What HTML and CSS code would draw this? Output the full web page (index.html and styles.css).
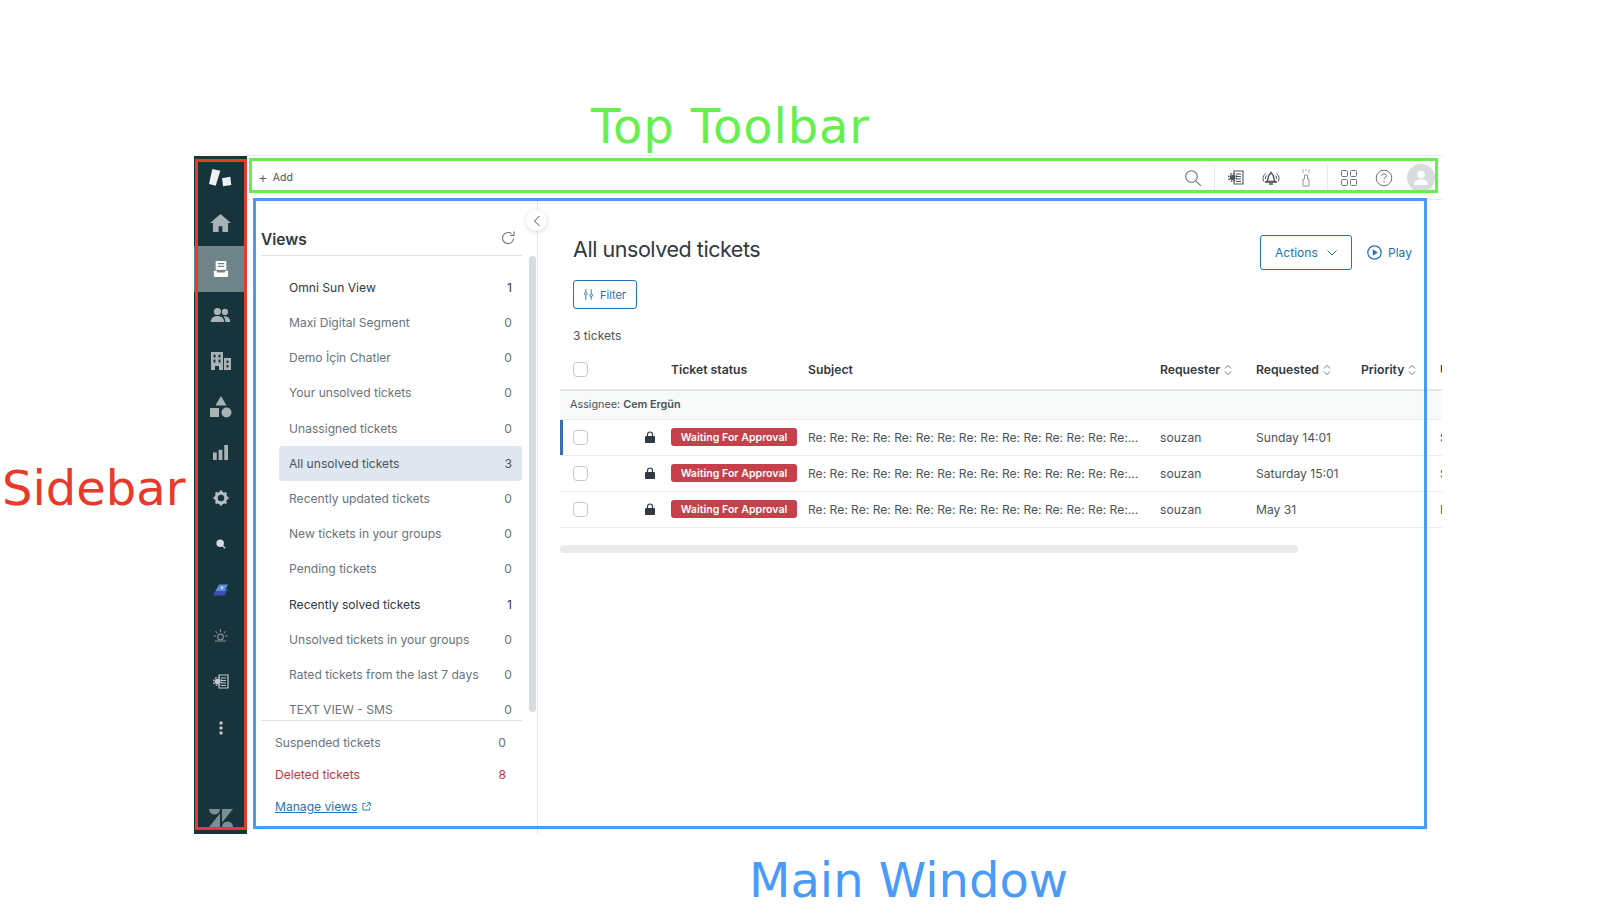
FILE: index.html
```html
<!DOCTYPE html>
<html lang="en">
<head>
    <meta charset="UTF-8">
    <title>All unsolved tickets</title>
    <link rel="stylesheet" href="styles.css">
</head>
<body>
<div class="screen">

    <div class="app">
        <nav class="sidebar">
            <div class="nav-item nav-logo">
                <svg width="23" height="18" viewBox="0 0 23 18"><path d="M3.300 0l8 1.700-4.600 15L0 15z" fill="#eef1f2"/><path d="M13 9.300l8.300-1.600 1 8.300-8.300 1.300z" fill="#eef1f2"/></svg>
            </div>
            <div class="nav-item">
                <svg width="21" height="18" viewBox="0 0 22 19"><path d="M11 0L0 9.500h3V19h6v-6h4v6h6V9.500h3z" fill="#a9b3b6"/></svg>
            </div>
            <div class="nav-item nav-active">
                <svg width="16" height="18" viewBox="0 0 18 20"><path d="M3 1h12v10H3z" fill="#fff"/><path d="M5.500 4h7M5.500 7h7" stroke="#6f8488" stroke-width="1.500"/><path d="M1 12h3l1 2h8l1-2h3v6a1 1 0 0 1-1 1H2a1 1 0 0 1-1-1z" fill="#fff"/></svg>
            </div>
            <div class="nav-item">
                <svg width="21" height="16" viewBox="0 0 22 18"><circle cx="7.500" cy="5" r="4" fill="#a9b3b6"/><circle cx="16" cy="5.500" r="3.500" fill="#a9b3b6"/><path d="M0 17c0-4.500 3-7 7.500-7s7.500 2.500 7.500 7z" fill="#a9b3b6"/><path d="M16.500 17H22c0-4-2.500-6.500-6-6.500-.8 0-1.300.1-1.800.2 1.500 1.300 2.300 3.600 2.300 6.300z" fill="#a9b3b6"/></svg>
            </div>
            <div class="nav-item">
                <svg width="20" height="20" viewBox="0 0 20 20"><path fill-rule="evenodd" d="M0 1h12v18H8v-4H4v4H0zM2.500 3.500v3h2v-3zm5 0v3h2v-3zm-5 5v3h2v-3zm5 0v3h2v-3z" fill="#a9b3b6"/><path fill-rule="evenodd" d="M13 7h7v12h-7zm2.500 2.500v2.500h2V9.500zm0 4.500v2.500h2V14z" fill="#a9b3b6"/></svg>
            </div>
            <div class="nav-item">
                <svg width="22" height="22" viewBox="0 0 22 22"><path d="M11 0l5.500 9.500h-11z" fill="#a9b3b6"/><path d="M0 12h9v9H0z" fill="#a9b3b6"/><circle cx="16.500" cy="16.500" r="5" fill="#a9b3b6"/></svg>
            </div>
            <div class="nav-item">
                <svg width="15" height="15" viewBox="0 0 16 16"><path d="M0 8h4v8H0zM6 5h4v11H6zM12 0h4v16h-4z" fill="#a9b3b6"/></svg>
            </div>
            <div class="nav-item">
                <svg width="16" height="16" viewBox="0 0 16 16"><circle cx="8" cy="8" r="4.800" fill="none" stroke="#b5bec0" stroke-width="3"/><path d="M8 .5v3M8 12.500v3M.5 8h3M12.500 8h3M2.700 2.700l2 2M11.300 11.300l2 2M2.700 13.300l2-2M11.300 4.700l2-2" stroke="#b5bec0" stroke-width="2.600"/></svg>
            </div>
            <div class="nav-item">
                <svg width="10" height="10" viewBox="0 0 12 12"><circle cx="5" cy="5" r="4.500" fill="#d5dadc"/><path d="M8 8l3 3" stroke="#d5dadc" stroke-width="1.600"/></svg>
            </div>
            <div class="nav-item">
                <svg width="15" height="12" viewBox="0 0 15 12"><path d="M0 11.500L3.500 5h11.500l-3.500 6.500z" fill="#3c4fb8"/><path d="M2.500 7L6 .5h9L11.500 7z" fill="#5b8fd8"/><path d="M7.500 3.800h3M9 2.300v3" stroke="#e4ecf5" stroke-width="1"/></svg>
            </div>
            <div class="nav-item">
                <svg width="15" height="13" viewBox="0 0 15 13"><circle cx="7.500" cy="8" r="2.800" fill="none" stroke="#7f9094" stroke-width="1.200"/><path d="M7.500 0v3M2.500 2l1.500 2.500M12.500 2L11 4.500M.5 7h2.500M12 7h2.500M2 12h11" stroke="#7f9094" stroke-width="1"/></svg>
            </div>
            <div class="nav-item">
                <svg width="16" height="15" viewBox="0 0 16 15"><path d="M6 1h9v13H6z" fill="none" stroke="#c0c8ca" stroke-width="1.200"/><path d="M8 4h5M8 6.500h5M8 9h5M8 11.500h5" stroke="#c0c8ca"/><circle cx="4.500" cy="7.500" r="2.800" fill="#c0c8ca"/><circle cx="4.500" cy="7.500" r="3.900" fill="none" stroke="#c0c8ca" stroke-width="1.400" stroke-dasharray="1.600 1.500"/></svg>
            </div>
            <div class="nav-item">
                <svg width="4" height="14" viewBox="0 0 4 14"><circle cx="2" cy="2" r="1.700" fill="#c0c8ca"/><circle cx="2" cy="7" r="1.700" fill="#c0c8ca"/><circle cx="2" cy="12" r="1.700" fill="#c0c8ca"/></svg>
            </div>
            <div class="nav-brand">
                <svg width="24" height="18" viewBox="0 0 24 18"><path d="M11 4.500V18H0z" fill="#7b8e92"/><path d="M11 0a5.500 5.500 0 0 1-11 0z" fill="#7b8e92"/><path d="M13 13.500V0h11z" fill="#7b8e92"/><path d="M13 18a5.500 5.500 0 0 1 11 0z" fill="#7b8e92"/></svg>
            </div>
        </nav>

        <div class="workspace">
            <header class="toolbar">
                <div class="add-btn"><span class="add-plus">+</span> Add</div>
                <div class="tools">
                    <div class="tool">
                        <svg width="18" height="18" viewBox="0 0 18 18"><circle cx="7.500" cy="7.500" r="5.800" fill="none" stroke="#68737d" stroke-width="1.100"/><path d="M11.800 11.800l5 5" stroke="#68737d" stroke-width="1.100"/></svg>
                    </div>
                    <div class="tool-divider"></div>
                    <div class="tool">
                        <svg width="16" height="15" viewBox="0 0 16 15"><path d="M6 1h9v13H6z" fill="#fff" stroke="#49545c" stroke-width="1.100"/><path d="M8 4h5M8 6.500h5M8 9h5M8 11.500h5" stroke="#49545c"/><circle cx="4.500" cy="7.500" r="2.800" fill="#49545c"/><circle cx="4.500" cy="7.500" r="3.900" fill="none" stroke="#49545c" stroke-width="1.400" stroke-dasharray="1.600 1.500"/></svg>
                    </div>
                    <div class="tool">
                        <svg width="18" height="14" viewBox="0 0 18 14"><path d="M5 10.500c1-1.500 1-3 1.500-5C7 3.500 8 2.500 9 2.500s2 1 2.500 3c.5 2 .5 3.500 1.500 5z" fill="none" stroke="#49545c" stroke-width="1.400"/><path d="M3 11h12M7 13h4M9 .5V2" stroke="#49545c" stroke-width="1.300"/><path d="M3.500 2.500C1.800 4 1 5.500 1 7.500c0 1 .3 2 .8 3M14.500 2.500C16.200 4 17 5.500 17 7.500c0 1-.3 2-.8 3M4.500 4.500C3.800 5.500 3.300 6.500 3.300 8M13.500 4.500c.7 1 1.200 2 1.200 3.500" fill="none" stroke="#49545c"/></svg>
                    </div>
                    <div class="tool">
                        <svg width="10" height="18" viewBox="0 0 10 18"><path d="M1 1h2M4 1h2M7 1h2M1 3h2M7 3h2" stroke="#a3abb0"/><path d="M3.500 6h3v4h1.500v7H2v-7h1.500z" fill="none" stroke="#8d969c"/></svg>
                    </div>
                    <div class="tool-divider"></div>
                    <div class="tool">
                        <svg width="16" height="16" viewBox="0 0 16 16"><g fill="none" stroke="#68737d" stroke-width="1"><rect x=".5" y=".5" width="6" height="6" rx="1"/><rect x="9.500" y=".5" width="6" height="6" rx="1"/><rect x=".5" y="9.500" width="6" height="6" rx="1"/><rect x="9.500" y="9.500" width="6" height="6" rx="1"/></g></svg>
                    </div>
                    <div class="tool">
                        <svg width="18" height="18" viewBox="0 0 18 18"><circle cx="9" cy="9" r="7.800" fill="none" stroke="#68737d" stroke-width="1"/><path d="M6.800 7c0-1.300 1-2.200 2.300-2.200S11.300 5.700 11.300 7c0 1.700-2.200 1.700-2.200 3.500" fill="none" stroke="#68737d"/><circle cx="9.100" cy="12.800" r=".7" fill="#68737d"/></svg>
                    </div>
                    <div class="avatar">
                        <svg width="16" height="16" viewBox="0 0 16 16"><circle cx="8" cy="4.500" r="3.800" fill="#fff"/><path d="M1 15c0-3.500 3-5.500 7-5.500s7 2 7 5.500z" fill="#fff"/></svg>
                    </div>
                </div>
            </header>

            <div class="content">
                <aside class="views">
                    <div class="collapse">
                        <svg width="8" height="12" viewBox="0 0 8 12"><path d="M6.500 1L1.500 6l5 5" fill="none" stroke="#49545c" stroke-width="1"/></svg>
                    </div>
                    <div class="views-head">
                        <h2>Views</h2>
                        <svg class="views-refresh" width="14" height="14" viewBox="0 0 14 14"><path d="M12.500 7.500A5.500 5.500 0 1 1 10.500 2.800" fill="none" stroke="#68737d" stroke-width="1.100"/><path d="M13 .5V4.500H9" fill="none" stroke="#68737d" stroke-width="1.100"/></svg>
                    </div>
                    <div class="views-list">
                        <div class="views-scroll"></div>
                        <div class="view-row view-has"><span>Omni Sun View</span><span>1</span></div>
                        <div class="view-row"><span>Maxi Digital Segment</span><span>0</span></div>
                        <div class="view-row"><span>Demo İçin Chatler</span><span>0</span></div>
                        <div class="view-row"><span>Your unsolved tickets</span><span>0</span></div>
                        <div class="view-row"><span>Unassigned tickets</span><span>0</span></div>
                        <div class="view-row view-selected"><span>All unsolved tickets</span><span>3</span></div>
                        <div class="view-row"><span>Recently updated tickets</span><span>0</span></div>
                        <div class="view-row"><span>New tickets in your groups</span><span>0</span></div>
                        <div class="view-row"><span>Pending tickets</span><span>0</span></div>
                        <div class="view-row view-has"><span>Recently solved tickets</span><span>1</span></div>
                        <div class="view-row"><span>Unsolved tickets in your groups</span><span>0</span></div>
                        <div class="view-row"><span>Rated tickets from the last 7 days</span><span>0</span></div>
                        <div class="view-row"><span>TEXT VIEW - SMS</span><span>0</span></div>
                    </div>
                    <div class="views-foot">
                        <div class="foot-row"><span>Suspended tickets</span><span>0</span></div>
                        <div class="foot-row foot-deleted"><span>Deleted tickets</span><span>8</span></div>
                        <div class="foot-row">
                            <a class="manage-link" href="#">Manage views</a>
                            <svg class="manage-icon" width="9" height="9" viewBox="0 0 10 10"><path d="M4 1.500H1v7.500h7.500V6M5.500 .8h3.700v3.700M9 1L4.500 5.500" fill="none" stroke="#1f73b7"/></svg>
                        </div>
                    </div>
                </aside>

                <main class="tickets">
                    <div class="tickets-head">
                        <h1>All unsolved tickets</h1>
                        <div class="tickets-actions">
                            <button class="btn btn-actions">Actions
                                <svg width="10" height="6" viewBox="0 0 10 6"><path d="M.5 .5L5 5 9.500 .5" fill="none" stroke="#1f73b7"/></svg>
                            </button>
                            <div class="play">
                                <svg width="15" height="15" viewBox="0 0 15 15"><circle cx="7.500" cy="7.500" r="6.700" fill="none" stroke="#1f73b7" stroke-width="1.200"/><path d="M5.800 4.300v6.400l5-3.200z" fill="#1f73b7"/></svg>
                                Play
                            </div>
                        </div>
                    </div>
                    <button class="btn btn-filter">
                        <svg width="9" height="11" viewBox="0 0 10 12"><path d="M2 0v3.500M2 7v5M8 0v5M8 8.500V12" stroke="#1f73b7"/><circle cx="2" cy="5.200" r="1.500" fill="none" stroke="#1f73b7"/><circle cx="8" cy="6.800" r="1.500" fill="none" stroke="#1f73b7"/></svg>
                        Filter
                    </button>
                    <div class="ticket-count">3 tickets</div>

                    <table class="ticket-table">
                        <colgroup>
                            <col class="col-check"><col class="col-lock"><col class="col-status"><col class="col-subject">
                            <col class="col-requester"><col class="col-requested"><col class="col-priority"><col class="col-updated">
                        </colgroup>
                        <thead>
                            <tr>
                                <th class="cell-check"><span class="check"></span></th>
                                <th></th>
                                <th>Ticket status</th>
                                <th>Subject</th>
                                <th>Requester <svg class="sort" width="8" height="12" viewBox="0 0 8 12"><path d="M1 4.500L4 1.200l3 3.300M1 7.500l3 3.300 3-3.300" fill="none" stroke="#68737d" stroke-width=".9"/></svg></th>
                                <th>Requested <svg class="sort" width="8" height="12" viewBox="0 0 8 12"><path d="M1 4.500L4 1.200l3 3.300M1 7.500l3 3.300 3-3.300" fill="none" stroke="#68737d" stroke-width=".9"/></svg></th>
                                <th>Priority <svg class="sort" width="8" height="12" viewBox="0 0 8 12"><path d="M1 4.500L4 1.200l3 3.300M1 7.500l3 3.300 3-3.300" fill="none" stroke="#68737d" stroke-width=".9"/></svg></th>
                                <th>Updated</th>
                            </tr>
                        </thead>
                        <tbody>
                            <tr class="group-row">
                                <td colspan="8">Assignee: <b>Cem Ergün</b></td>
                            </tr>
                            <tr class="ticket-row ticket-current">
                                <td class="cell-check"><span class="check"></span></td>
                                <td class="cell-lock"><svg width="10" height="12" viewBox="0 0 10 12"><path d="M2.500 5V3.500a2.500 2.500 0 0 1 5 0V5" fill="none" stroke="#2f3941" stroke-width="1.200"/><rect y="5" width="10" height="7" rx="1" fill="#2f3941"/></svg></td>
                                <td><span class="badge">Waiting For Approval</span></td>
                                <td>Re: Re: Re: Re: Re: Re: Re: Re: Re: Re: Re: Re: Re: Re: Re:...</td>
                                <td>souzan</td>
                                <td>Sunday 14:01</td>
                                <td></td>
                                <td>Sunday</td>
                            </tr>
                            <tr class="ticket-row">
                                <td class="cell-check"><span class="check"></span></td>
                                <td class="cell-lock"><svg width="10" height="12" viewBox="0 0 10 12"><path d="M2.500 5V3.500a2.500 2.500 0 0 1 5 0V5" fill="none" stroke="#2f3941" stroke-width="1.200"/><rect y="5" width="10" height="7" rx="1" fill="#2f3941"/></svg></td>
                                <td><span class="badge">Waiting For Approval</span></td>
                                <td>Re: Re: Re: Re: Re: Re: Re: Re: Re: Re: Re: Re: Re: Re: Re:...</td>
                                <td>souzan</td>
                                <td>Saturday 15:01</td>
                                <td></td>
                                <td>Saturday</td>
                            </tr>
                            <tr class="ticket-row">
                                <td class="cell-check"><span class="check"></span></td>
                                <td class="cell-lock"><svg width="10" height="12" viewBox="0 0 10 12"><path d="M2.500 5V3.500a2.500 2.500 0 0 1 5 0V5" fill="none" stroke="#2f3941" stroke-width="1.200"/><rect y="5" width="10" height="7" rx="1" fill="#2f3941"/></svg></td>
                                <td><span class="badge">Waiting For Approval</span></td>
                                <td>Re: Re: Re: Re: Re: Re: Re: Re: Re: Re: Re: Re: Re: Re: Re:...</td>
                                <td>souzan</td>
                                <td>May 31</td>
                                <td></td>
                                <td>Friday</td>
                            </tr>
                        </tbody>
                    </table>
                    <div class="table-scroll"></div>
                </main>
            </div>
        </div>
    </div>

    <!-- annotations drawn over the screenshot -->
    <div class="mark mark-sidebar"></div>
    <div class="mark mark-toolbar"></div>
    <div class="mark mark-main"></div>
    <div class="label label-toolbar">Top Toolbar</div>
    <div class="label label-sidebar">Sidebar</div>
    <div class="label label-main">Main Window</div>

</div>
</body>
</html>
```

FILE: styles.css
```css
* {
    box-sizing: border-box;
}

body {
    margin: 0;
    background-color: #fff;
    font-family: Inter, "Liberation Sans", sans-serif;
    color: #2f3941;
}

.screen {
    position: relative;
    width: 1622px;
    height: 922px;
    overflow: hidden;
    padding: 155px 0 0 194px;
}

.app {
    display: flex;
    width: 1248px;
    height: 679px;
}

/* sidebar */
.sidebar {
    display: flex;
    flex-direction: column;
    flex-shrink: 0;
    width: 53px;
    margin-top: 1px;
    background-color: #17343d;
}

.nav-item {
    display: flex;
    align-items: center;
    justify-content: center;
    flex-shrink: 0;
    height: 45.9px;
}

.nav-logo {
    height: 44px;
}

.nav-active {
    background-color: #6f8488;
}

.nav-brand {
    display: flex;
    justify-content: center;
    margin-top: auto;
    padding-bottom: 7px;
}

/* toolbar */
.workspace {
    display: flex;
    flex-direction: column;
    flex: 1;
    min-width: 0;
}

.toolbar {
    display: flex;
    align-items: center;
    justify-content: space-between;
    flex-shrink: 0;
    height: 45px;
    padding: 0 7px 0 11px;
    border-top: 1px solid #e9ebed;
    border-bottom: 1px solid #e9ebed;
}

.add-btn {
    display: flex;
    align-items: center;
    gap: 5px;
    font-size: 10.5px;
    color: #49545c;
}

.add-plus {
    font-size: 15px;
    font-weight: 300;
    line-height: 15px;
}

.tools {
    display: flex;
    align-items: center;
}

.tool {
    display: flex;
    align-items: center;
    justify-content: center;
    width: 35px;
}

.tool-divider {
    width: 1px;
    height: 26px;
    margin: 0 3.5px;
    background-color: #e9ebed;
}

.avatar {
    display: flex;
    align-items: center;
    justify-content: center;
    width: 28px;
    height: 28px;
    margin-left: 5.5px;
    border-radius: 50%;
    background-color: #d8dcde;
}

/* views panel */
.content {
    display: flex;
    flex: 1;
    min-height: 0;
}

.views {
    position: relative;
    display: flex;
    flex-direction: column;
    flex-shrink: 0;
    width: 291px;
    border-right: 1px solid #e4e7e9;
}

.collapse {
    position: absolute;
    top: 10px;
    right: -10px;
    z-index: 1;
    display: flex;
    align-items: center;
    justify-content: center;
    width: 21px;
    height: 21px;
    border-radius: 50%;
    background-color: #fff;
    box-shadow: 0 1px 4px rgba(47, 57, 65, 0.2);
}

.views-head {
    display: flex;
    align-items: center;
    justify-content: space-between;
    flex-shrink: 0;
    height: 56px;
    margin: 0 15px 0 14px;
    padding: 24px 1px 0 0;
    border-bottom: 1px solid #e0e3e6;
}

.views-head h2 {
    margin: 0;
    font-size: 15.5px;
    font-weight: 600;
}

.views-refresh {
    margin: -3px 6px 0 0;
}

.views-list {
    position: relative;
    flex-shrink: 0;
    height: 464px;
    padding: 13.8px 15px 0 32px;
    overflow: hidden;
}

.views-scroll {
    position: absolute;
    top: 0;
    right: 1px;
    width: 7px;
    height: 456px;
    border-radius: 4px;
    background-color: #d8dcde;
}

.view-row {
    display: flex;
    align-items: center;
    justify-content: space-between;
    height: 35.2px;
    padding: 0 10px;
    font-size: 12.1px;
    color: #68737d;
}

.view-has {
    color: #2f3941;
}

.view-selected {
    border-radius: 3px;
    background-color: #e0e7f1;
    color: #49545c;
}

.views-foot {
    margin: 0 15px 0 14px;
    padding-top: 5px;
    border-top: 1px solid #e0e3e6;
}

.foot-row {
    display: flex;
    align-items: center;
    justify-content: space-between;
    height: 32px;
    padding: 0 16px 0 14px;
    font-size: 12.1px;
    color: #68737d;
}

.foot-row:last-child {
    justify-content: flex-start;
}

.foot-deleted {
    color: #cc3340;
}

.manage-link {
    color: #1f73b7;
}

.manage-icon {
    margin-left: 5px;
}

/* tickets */
.tickets {
    flex: 1;
    min-width: 0;
    padding-left: 22px;
    overflow: hidden;
}

.tickets-head {
    display: flex;
    align-items: flex-start;
    justify-content: space-between;
    padding: 35px 30px 0 13px;
}

.tickets-head h1 {
    margin: 0;
    font-size: 21.5px;
    font-weight: 400;
    line-height: 28px;
    letter-spacing: -0.45px;
}

.tickets-actions {
    display: flex;
    align-items: center;
    gap: 15px;
}

.btn {
    display: flex;
    align-items: center;
    background-color: #fff;
    border: 1px solid #1f73b7;
    border-radius: 3px;
    font-family: inherit;
    color: #1f73b7;
    cursor: pointer;
}

.btn-actions {
    justify-content: center;
    gap: 9px;
    width: 92px;
    height: 35px;
    font-size: 12.1px;
}

.play {
    display: flex;
    align-items: center;
    gap: 6px;
    font-size: 12.1px;
    color: #1f73b7;
}

.btn-filter {
    justify-content: center;
    gap: 7px;
    width: 64px;
    height: 29px;
    margin: 10px 0 0 13px;
    font-size: 11px;
}

.ticket-count {
    height: 20px;
    margin: 17px 0 3px 13px;
    font-size: 12.1px;
    line-height: 20px;
    color: #49545c;
}

.ticket-table {
    table-layout: fixed;
    border-collapse: collapse;
    width: 1000px;
}

.col-check { width: 70px; }
.col-lock { width: 41px; }
.col-status { width: 137px; }
.col-subject { width: 352px; }
.col-requester { width: 96px; }
.col-requested { width: 105px; }
.col-priority { width: 79px; }
.col-updated { width: 120px; }

.ticket-table th {
    height: 41px;
    padding: 0;
    border-bottom: 2px solid #e4e7e9;
    font-size: 12.2px;
    font-weight: 600;
    text-align: left;
    color: #2f3941;
    white-space: nowrap;
}

.ticket-table td {
    padding: 0;
    font-size: 12.1px;
    color: #49545c;
    white-space: nowrap;
}

.sort {
    vertical-align: -2px;
    margin-left: 1px;
}

.ticket-table .group-row td {
    height: 29px;
    padding-left: 10px;
    border-bottom: 1px solid #e9ebed;
    background-color: #f8f9f9;
    font-size: 10.8px;
}

.group-row b {
    font-weight: 600;
}

.ticket-row td {
    height: 36px;
    border-bottom: 1px solid #e9ebed;
}

.ticket-table .cell-check {
    padding-left: 13px;
}

.ticket-current .cell-check {
    box-shadow: inset 3px 0 0 #3a6db5;
}

.cell-lock svg {
    display: block;
    margin-left: 15px;
}

.check {
    display: block;
    width: 15px;
    height: 15px;
    border: 1px solid #c2c8cc;
    border-radius: 4px;
    background-color: #fff;
}

.badge {
    display: block;
    width: 126px;
    height: 18px;
    border-radius: 3px;
    background-color: #c5404b;
    font-size: 10.6px;
    font-weight: 600;
    line-height: 19px;
    text-align: center;
    color: #fff;
}

.table-scroll {
    width: 738px;
    height: 8px;
    margin-top: 17px;
    border-radius: 4px;
    background-color: #e9ebed;
}

/* annotations */
.mark {
    position: absolute;
    border-style: solid;
    border-width: 3px;
}

.mark-sidebar {
    left: 195px;
    top: 159px;
    width: 52px;
    height: 671px;
    border-color: #e8392a;
}

.mark-toolbar {
    left: 249px;
    top: 158px;
    width: 1189px;
    height: 35px;
    border-color: #66f04d;
}

.mark-main {
    left: 253px;
    top: 198px;
    width: 1174px;
    height: 631px;
    border-color: #4a9bf8;
}

.label {
    position: absolute;
    font-family: "DejaVu Sans", sans-serif;
    font-size: 48px;
    line-height: 56px;
    white-space: nowrap;
}

.label-toolbar {
    left: 591px;
    top: 98px;
    letter-spacing: 0.9px;
    color: #66f04d;
}

.label-sidebar {
    left: 2px;
    top: 460px;
    color: #e8392a;
}

.label-main {
    left: 749px;
    top: 852px;
    color: #4a9bf8;
}
```
